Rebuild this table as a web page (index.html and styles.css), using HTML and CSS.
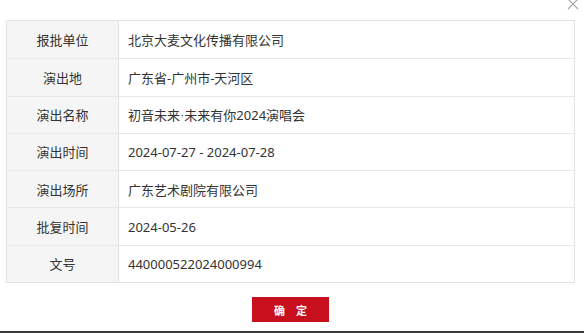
FILE: index.html
```html
<!DOCTYPE html>
<html lang="zh">
<head>
<meta charset="utf-8">
<link rel="stylesheet" href="styles.css">
</head>
<body>
<div class="dialog">
  <button class="close" aria-label="关闭">
    <svg width="12" height="12" viewBox="0 0 12 12"><path d="M1 1L11 11M11 1L1 11" stroke="#a8a8a8" stroke-width="1.2" fill="none"/></svg>
  </button>
  <div class="table">
    <div class="row"><div class="label">报批单位</div><div class="value">北京大麦文化传播有限公司</div></div>
    <div class="row"><div class="label">演出地</div><div class="value">广东省-广州市-天河区</div></div>
    <div class="row"><div class="label">演出名称</div><div class="value">初音未来<span class="dot">·</span>未来有你2024演唱会</div></div>
    <div class="row"><div class="label">演出时间</div><div class="value">2024-07-27 - 2024-07-28</div></div>
    <div class="row"><div class="label">演出场所</div><div class="value">广东艺术剧院有限公司</div></div>
    <div class="row"><div class="label">批复时间</div><div class="value">2024-05-26</div></div>
    <div class="row"><div class="label">文号</div><div class="value">440000522024000994</div></div>
  </div>
  <div class="actions"><button class="ok"><span>确</span><span>定</span></button></div>
  <div class="spacer"></div>
  <div class="edge"></div>
</div>
</body>
</html>
```
FILE: styles.css
```css
* { box-sizing: border-box; }
html, body { margin: 0; padding: 0; background: #fff; }
body {
  width: 584px;
  height: 333px;
  overflow: hidden;
  font-family: "Noto Sans", "Noto Sans CJK SC", sans-serif;
  color: #333;
}
.dialog {
  position: relative;
  height: 333px;
  display: flex;
  flex-direction: column;
  padding: 20px 9px 0 6px;
}
.close {
  position: absolute;
  top: -2px;
  right: 5px;
  border: 0;
  background: none;
  padding: 0;
  width: 12px;
  height: 12px;
  cursor: pointer;
}
.close svg { display: block; }
.table {
  display: grid;
  grid-template-rows: repeat(7, 1fr);
  height: 263px;
  border: 1px solid #e3e3e3;
}
.row {
  display: grid;
  grid-template-columns: 112px 1fr;
  border-top: 1px solid #e8e8e8;
}
.row:first-child { border-top: 0; }
.label {
  background: #f5f5f5;
  border-right: 1px solid #e3e3e3;
  display: flex;
  align-items: center;
  justify-content: center;
  font-size: 13px;
  color: #333;
}
.value {
  display: flex;
  align-items: center;
  padding-left: 9px;
  font-size: 13px;
  color: #333;
  white-space: pre;
}
.dot {
  font-family: "Liberation Sans", sans-serif;
}
.actions {
  display: flex;
  justify-content: center;
  padding-top: 14px;
}
.ok {
  width: 77px;
  height: 25px;
  border: 0;
  border-radius: 0;
  background: #c80f1e;
  color: #fff;
  font-family: "Noto Sans CJK SC", sans-serif;
  font-size: 11px;
  font-weight: bold;
  padding: 0;
  display: flex;
  align-items: center;
  justify-content: center;
  gap: 11px;
}
.spacer { flex: 1; }
.edge {
  height: 2px;
  margin: 0 -9px 0 -6px;
  background: #3c3c3c;
}
```
